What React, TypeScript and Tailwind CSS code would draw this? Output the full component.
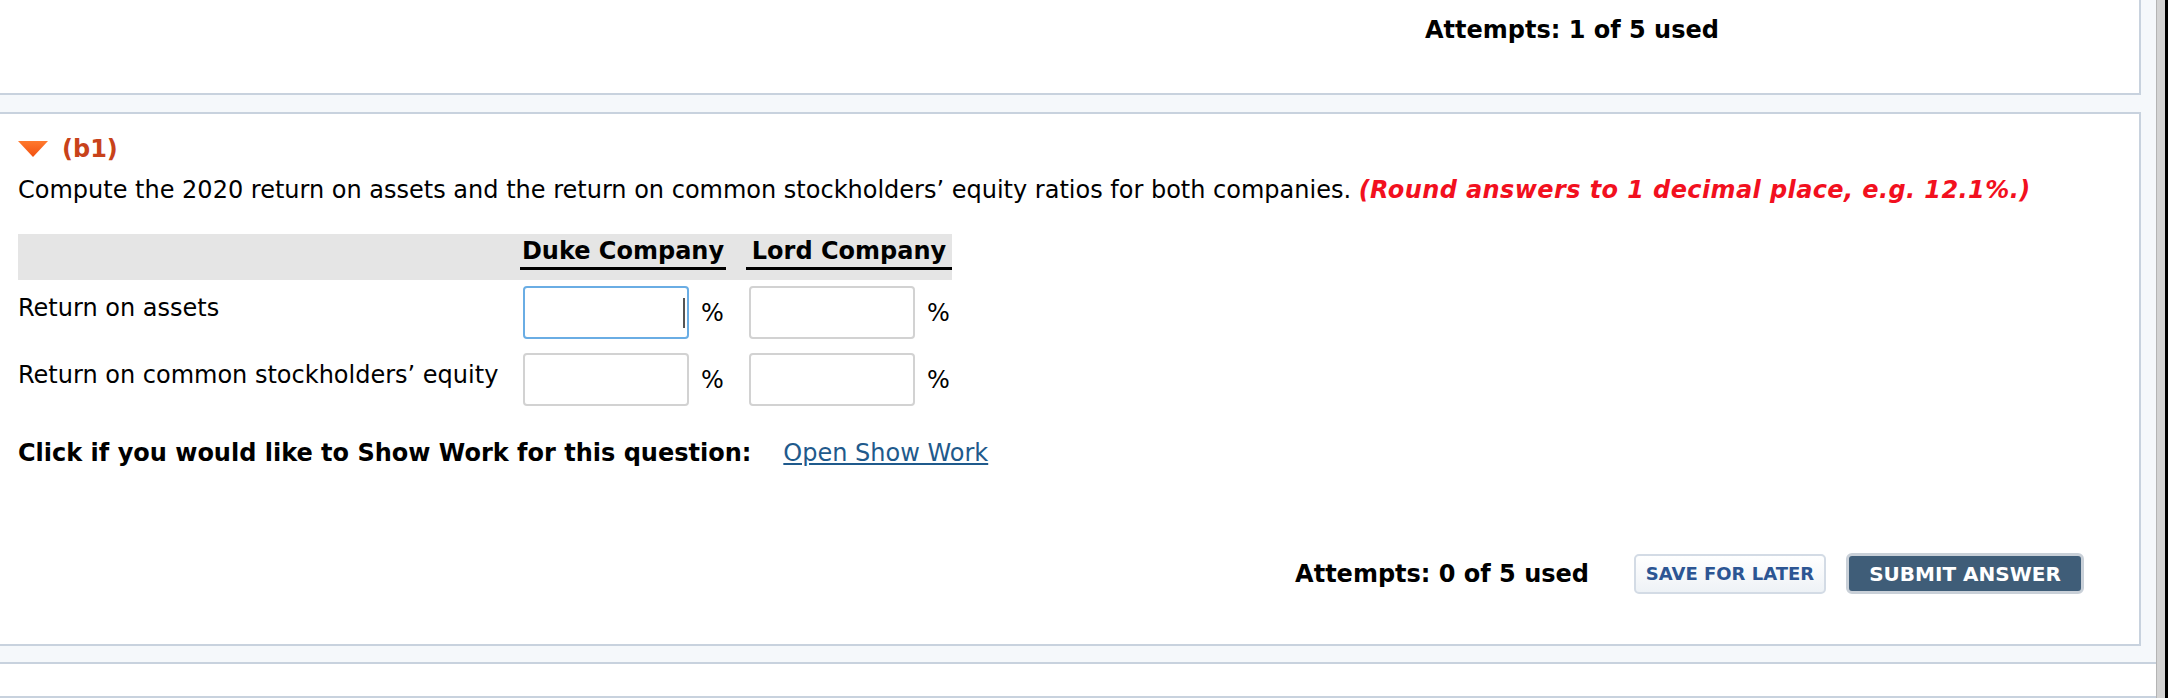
import React from "react";

function Triangle() {
  return (
    <svg width="30" height="16" viewBox="0 0 30 16" className="shrink-0">
      <defs>
        <linearGradient id="tri" x1="0" y1="0" x2="0" y2="1">
          <stop offset="0" stopColor="#ff7a2e" />
          <stop offset="1" stopColor="#f2500f" />
        </linearGradient>
      </defs>
      <polygon points="0,0 30,0 15,16" fill="url(#tri)" />
    </svg>
  );
}

function PctInput({ focused }: { focused?: boolean }) {
  return (
    <div className="flex items-center">
      <div className="relative ml-[3px]">
        <input
          type="text"
          className={
            "block w-[166px] h-[53px] rounded-[4px] bg-white outline-none " +
            (focused ? "border-2 border-[#6aade4]" : "border-2 border-[#d2d2d2]")
          }
        />
        {focused && (
          <div className="absolute right-[4px] top-[12px] w-[2px] h-[30px] bg-[#555]" />
        )}
      </div>
      <span className="ml-[12px] text-[24px] leading-[28px]">%</span>
    </div>
  );
}

export default function App() {
  return (
    <div className="flex w-[2168px] h-[698px] overflow-hidden bg-[#f5f8fb] text-black font-['DejaVu_Sans',Verdana,sans-serif]">
      <div className="flex flex-col w-[2156px] shrink-0">
        {/* top panel */}
        <div className="h-[95px] w-[2141px] bg-white border-r-2 border-b-2 border-[#c8d2de] pl-[1425px] pt-[16px]">
          <div className="text-[24px] leading-[28px] font-bold whitespace-nowrap">Attempts: 1 of 5 used</div>
        </div>

        {/* question panel */}
        <div className="mt-[17px] h-[534px] w-[2141px] bg-white border-t-2 border-r-2 border-b-2 border-[#c8d2de] pl-[18px] flex flex-col">
          <div className="mt-[21px] flex items-center h-[28px]">
            <Triangle />
            <span className="ml-[14px] text-[24px] leading-[28px] font-bold text-[#c8421a]">(b1)</span>
          </div>
          <div className="mt-[13px] text-[24px] leading-[28px] whitespace-nowrap">
            Compute the 2020 return on assets and the return on common stockholders’ equity ratios for both companies.{" "}
            <span className="font-bold italic tracking-[0.4px] text-[#f2101e]">(Round answers to 1 decimal place, e.g. 12.1%.)</span>
          </div>

          {/* table */}
          <div className="mt-[30px] w-[934px]">
            <div className="flex h-[46px] bg-[#e5e5e5]">
              <div className="w-[502px]" />
              <div className="w-[206px] h-[36px] border-b-[3px] border-black flex items-center justify-center text-[24px] font-bold whitespace-nowrap">
                Duke Company
              </div>
              <div className="w-[20px]" />
              <div className="w-[206px] h-[36px] border-b-[3px] border-black flex items-center justify-center text-[24px] font-bold whitespace-nowrap">
                Lord Company
              </div>
            </div>
            <div className="mt-[6px] flex items-center h-[53px]">
              <div className="w-[502px] text-[24px] leading-[28px] pb-[10px]">Return on assets</div>
              <div className="w-[226px]"><PctInput focused /></div>
              <div className="w-[206px]"><PctInput /></div>
            </div>
            <div className="mt-[14px] flex items-center h-[53px]">
              <div className="w-[502px] text-[24px] leading-[28px] pb-[10px] whitespace-nowrap">Return on common stockholders’ equity</div>
              <div className="w-[226px]"><PctInput /></div>
              <div className="w-[206px]"><PctInput /></div>
            </div>
          </div>

          <div className="mt-[33px] flex items-center text-[24px] leading-[28px] whitespace-nowrap">
            <span className="font-bold">Click if you would like to Show Work for this question:</span>
            <a href="#" className="ml-[32px] text-[#1f5a8c] underline">Open Show Work</a>
          </div>

          <div className="mt-[86px] flex items-center justify-end pr-[55px]">
            <span className="text-[24px] leading-[28px] font-bold whitespace-nowrap">Attempts: 0 of 5 used</span>
            <button className="ml-[45px] w-[192px] h-[40px] rounded-[5px] border-2 border-[#d3dbe5] bg-gradient-to-b from-[#ffffff] to-[#eef2f6] text-[#2c5593] text-[18px] font-bold whitespace-nowrap">
              SAVE FOR LATER
            </button>
            <button className="ml-[20px] w-[238px] h-[41px] rounded-[6px] border-[3px] border-[#c9d0d8] bg-[#3f5d78] text-white text-[20px] font-bold whitespace-nowrap">
              SUBMIT ANSWER
            </button>
          </div>
        </div>

        {/* next panel */}
        <div className="mt-[16px] h-[36px] w-full bg-white border-t-2 border-b-2 border-[#c8d2de]" />
      </div>
      <div className="w-[12px] h-full border-l border-[#b4b4b4] bg-[#d4d4d4] border-r-[3px] border-r-black" />
    </div>
  );
}
